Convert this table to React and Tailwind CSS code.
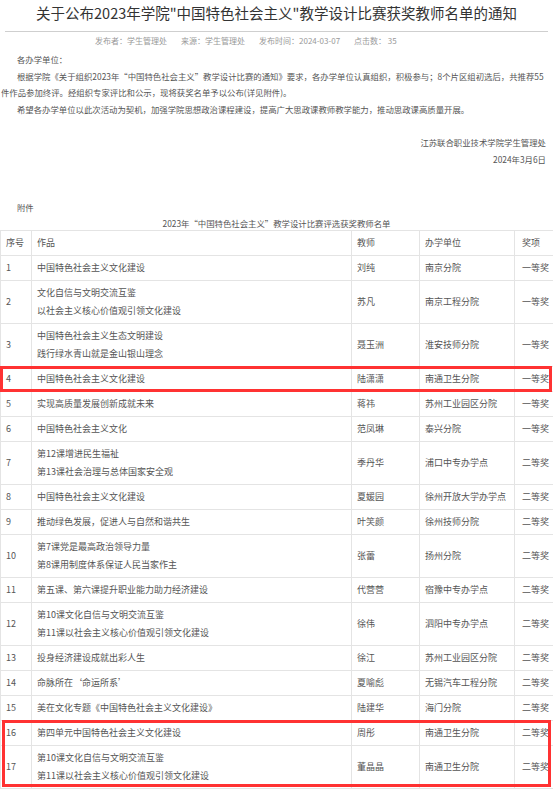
import React from "react";

const rows = [
  [1, ["中国特色社会主义文化建设"], "刘纯", "南京分院", "一等奖"],
  [2, ["文化自信与文明交流互鉴", "以社会主义核心价值观引领文化建设"], "苏凡", "南京工程分院", "一等奖"],
  [3, ["中国特色社会主义生态文明建设", "践行绿水青山就是金山银山理念"], "聂玉洲", "淮安技师分院", "一等奖"],
  [4, ["中国特色社会主义文化建设"], "陆潇潇", "南通卫生分院", "一等奖"],
  [5, ["实现高质量发展创新成就未来"], "蒋祎", "苏州工业园区分院", "一等奖"],
  [6, ["中国特色社会主义文化"], "范凤琳", "泰兴分院", "一等奖"],
  [7, ["第12课增进民生福祉", "第13课社会治理与总体国家安全观"], "季丹华", "浦口中专办学点", "二等奖"],
  [8, ["中国特色社会主义文化建设"], "夏媛园", "徐州开放大学办学点", "二等奖"],
  [9, ["推动绿色发展，促进人与自然和谐共生"], "叶笑颜", "徐州技师分院", "二等奖"],
  [10, ["第7课党是最高政治领导力量", "第8课用制度体系保证人民当家作主"], "张蕾", "扬州分院", "二等奖"],
  [11, ["第五课、第六课提升职业能力助力经济建设"], "代营营", "宿豫中专办学点", "二等奖"],
  [12, ["第10课文化自信与文明交流互鉴", "第11课以社会主义核心价值观引领文化建设"], "徐伟", "泗阳中专办学点", "二等奖"],
  [13, ["投身经济建设成就出彩人生"], "徐江", "苏州工业园区分院", "二等奖"],
  [14, ["命脉所在‘命运所系’"], "夏喻彪", "无锡汽车工程分院", "二等奖"],
  [15, ["美在文化专题《中国特色社会主义文化建设》"], "陆建华", "海门分院", "二等奖"],
  [16, ["第四单元中国特色社会主义文化建设"], "周彤", "南通卫生分院", "二等奖"],
  [17, ["第10课文化自信与文明交流互鉴", "第11课以社会主义核心价值观引领文化建设"], "董晶晶", "南通卫生分院", "二等奖"],
];

const td = "border border-[#e4e4e4] px-[5px] py-[4px] align-middle leading-[16px] whitespace-nowrap overflow-hidden";

export default function App() {
  return (
    <div className="relative w-[553px] h-[789px] overflow-hidden bg-white text-[#555] font-['Noto_Sans_CJK_SC','Noto_Sans',sans-serif]">
      <h1 className="pt-[3px] text-center text-[14.5px] leading-[20px] text-[#333] font-normal">
        关于公布2023年学院"中国特色社会主义"教学设计比赛获奖教师名单的通知
      </h1>
      <div className="mx-[5px] mt-[8px] border-t border-[#cfcfcf]"></div>
      <div className="mt-[3px] pl-[95px] text-[8px] leading-[12px] text-[#999] whitespace-nowrap">
        <span className="mr-[14px]">发布者：学生管理处</span>
        <span className="mr-[14px]">来源：学生管理处</span>
        <span className="mr-[14px]">发布时间：2024-03-07</span>
        <span>点击数： 35</span>
      </div>
      <div className="mt-[4px] text-[8.4px] leading-[16.5px]">
        <div className="pl-[17px]">各办学单位：</div>
        <div className="pl-[17px] whitespace-nowrap">
          根据学院《关于组织2023年“中国特色社会主义”教学设计比赛的通知》要求，各办学单位认真组织，积极参与；8个片区组初选后，共推荐55
        </div>
        <div className="pl-[1px]">件作品参加终评。经组织专家评比和公示，现将获奖名单予以公布(详见附件)。</div>
        <div className="pl-[17px]">希望各办学单位以此次活动为契机，加强学院思想政治课程建设，提高广大思政课教师教学能力，推动思政课高质量开展。</div>
        <div className="mt-[17px] pr-[7px] text-right">江苏联合职业技术学院学生管理处</div>
        <div className="pr-[7px] text-right">2024年3月6日</div>
        <div className="mt-[32px] pl-[17px]">附件</div>
        <div className="text-center leading-[14px]">2023年“中国特色社会主义”教学设计比赛评选获奖教师名单</div>
      </div>
      <table className="table-fixed border-collapse w-[574px] text-[9px] text-[#555]">
        <colgroup>
          <col className="w-[31px]" />
          <col className="w-[320px]" />
          <col className="w-[68px]" />
          <col className="w-[95px]" />
          <col className="w-[60px]" />
        </colgroup>
        <thead>
          <tr>
            <th className={td + " text-left font-normal"}>序号</th>
            <th className={td + " text-left font-normal"}>作品</th>
            <th className={td + " text-left font-normal"}>教师</th>
            <th className={td + " text-left font-normal"}>办学单位</th>
            <th className={td + " text-left font-normal pl-[7px]"}>奖项</th>
          </tr>
        </thead>
        <tbody>
          {rows.map(([n, works, teacher, unit, award]) => (
            <tr key={n}>
              <td className={td}>{n}</td>
              <td className={td}>
                <div className="flex flex-col gap-[2px]">
                  {works.map((w) => (
                    <div key={w}>{w}</div>
                  ))}
                </div>
              </td>
              <td className={td}>{teacher}</td>
              <td className={td}>{unit}</td>
              <td className={td + " pl-[7px]"}>{award}</td>
            </tr>
          ))}
          <tr>
            <td className={td + " h-[25px]"}></td>
            <td className={td}></td>
            <td className={td}></td>
            <td className={td}></td>
            <td className={td}></td>
          </tr>
        </tbody>
      </table>
      <div className="absolute left-[0px] top-[366px] w-[552px] h-[26px] border-[3px] border-[#ff3232]"></div>
      <div className="absolute left-[2px] top-[720px] w-[549px] h-[67px] border-[3px] border-[#ff3232]"></div>
    </div>
  );
}
